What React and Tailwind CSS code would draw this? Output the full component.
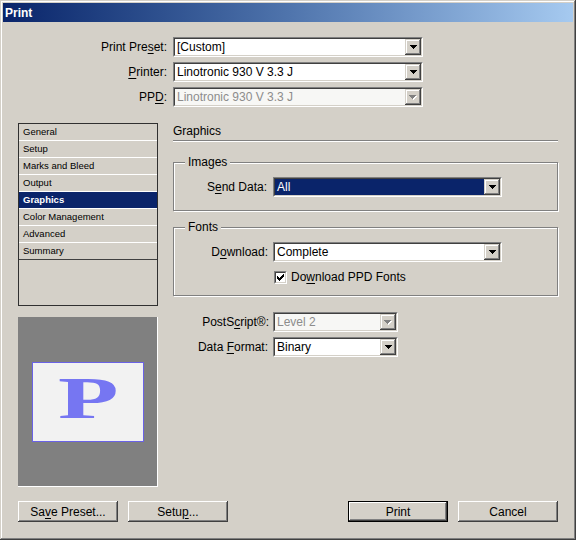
import React from "react";

const RAISED_BTN =
  "shadow-[inset_-1px_-1px_0_#404040,inset_1px_1px_0_#ffffff,inset_-2px_-2px_0_#808080,inset_2px_2px_0_#d4d0c8]";
const RAISED_ARROW =
  "shadow-[inset_-1px_-1px_0_#404040,inset_1px_1px_0_#d4d0c8,inset_-2px_-2px_0_#808080,inset_2px_2px_0_#ffffff]";

function Arrow({ disabled }) {
  const d = "M0 0h7v1H0z M1 1h5v1H1z M2 2h3v1H2z M3 3h1v1H3z";
  if (disabled) {
    return (
      <svg width="8" height="5" viewBox="0 0 8 5">
        <path d={d} fill="#ffffff" transform="translate(1 1)" />
        <path d={d} fill="#808080" />
      </svg>
    );
  }
  return (
    <svg width="7" height="4" viewBox="0 0 7 4">
      <path d={d} fill="#000000" />
    </svg>
  );
}

function Select({ value, widthClass, disabled, highlighted }) {
  return (
    <div
      className={`h-[20px] ${widthClass} border border-t-[#808080] border-l-[#808080] border-b-white border-r-white`}
    >
      <div
        className={`flex h-full border border-t-[#404040] border-l-[#404040] border-b-[#d4d0c8] border-r-[#d4d0c8] ${
          disabled ? "bg-[#f7f7f5]" : "bg-white"
        }`}
      >
        <div
          className={`flex-1 flex items-center pl-[2px] text-[12px] leading-[14px] ${
            highlighted ? "bg-[#0a246a] text-white" : disabled ? "text-[#8c8c8c]" : "text-black"
          }`}
        >
          {value}
        </div>
        <div className={`w-[16px] h-full bg-[#d4d0c8] flex items-center justify-center ${RAISED_ARROW}`}>
          <Arrow disabled={disabled} />
        </div>
      </div>
    </div>
  );
}

function Checkbox() {
  return (
    <div className="w-[13px] h-[13px] border border-t-[#808080] border-l-[#808080] border-b-white border-r-white">
      <div className="w-full h-full bg-white border border-t-[#404040] border-l-[#404040] border-b-[#d4d0c8] border-r-[#d4d0c8] flex items-center justify-center">
        <svg width="7" height="7" viewBox="0 0 7 7">
          <path
            d="M6 0h1v1h-1z M5 1h2v1h-2z M0 2h1v1H0z M4 2h3v1H4z M0 3h2v1H0z M3 3h3v1H3z M0 4h5v1H0z M1 5h3v1H1z M2 6h1v1H2z"
            fill="#000"
          />
        </svg>
      </div>
    </div>
  );
}

function PushButton({ children, isDefault }) {
  const inner = (
    <div
      className={`h-full w-full bg-[#d4d0c8] flex items-center justify-center text-[12px] leading-[14px] text-black ${RAISED_BTN}`}
    >
      {children}
    </div>
  );
  if (isDefault) {
    return <div className="w-[100px] h-[21px] border border-black">{inner}</div>;
  }
  return <div className="w-[100px] h-[21px]">{inner}</div>;
}

function U({ children }) {
  return <span className="underline underline-offset-[2px] decoration-[1px]">{children}</span>;
}

function TopRow({ label, children }) {
  return (
    <div className="flex items-center">
      <div className="w-[165px] text-right text-[12px] leading-[14px] text-black pr-[1px]">{label}</div>
      <div className="ml-[5px]">{children}</div>
    </div>
  );
}

const NAV = [
  "General",
  "Setup",
  "Marks and Bleed",
  "Output",
  "Graphics",
  "Color Management",
  "Advanced",
  "Summary",
];

function GroupBox({ title, heightClass, children }) {
  return (
    <div
      className={`relative w-[385px] ${heightClass} border border-[#808080] shadow-[inset_1px_1px_0_#ffffff,1px_1px_0_#ffffff]`}
    >
      <span className="absolute -top-[8px] left-[11px] bg-[#d4d0c8] px-[3px] text-[12px] leading-[14px] text-black">
        {title}
      </span>
      {children}
    </div>
  );
}

export default function App() {
  return (
    <div className="w-[576px] h-[540px] bg-[#d4d0c8] p-[3px] font-['Liberation_Sans',Arial,sans-serif] shadow-[inset_-1px_-1px_0_#404040,inset_1px_1px_0_#d4d0c8,inset_-2px_-2px_0_#808080,inset_2px_2px_0_#ffffff] overflow-hidden">
      {/* Title bar */}
      <div className="h-[19px] bg-linear-to-r from-[#0a246a] via-[#4f74ac] to-[#a6caf0] flex items-center pl-[2px]">
        <span className="text-white font-bold text-[12px] leading-[14px]">Print</span>
      </div>

      {/* Top form */}
      <div className="mt-[15px] flex flex-col gap-[5px]">
        <TopRow label={<>Print Pre<U>s</U>et:</>}>
          <Select value="[Custom]" widthClass="w-[250px]" />
        </TopRow>
        <TopRow label={<><U>P</U>rinter:</>}>
          <Select value="Linotronic 930 V 3.3 J" widthClass="w-[250px]" />
        </TopRow>
        <TopRow label={<>PP<U>D</U>:</>}>
          <Select value="Linotronic 930 V 3.3 J" widthClass="w-[250px]" disabled />
        </TopRow>
      </div>

      {/* Main */}
      <div className="mt-[16px] flex pl-[15px] gap-[15px]">
        {/* Left column */}
        <div className="w-[140px] flex flex-col">
          <div className="w-[140px] h-[183px] border border-[#303030] bg-[#d4d0c8]">
            {NAV.map((item, i) => {
              const selected = item === "Graphics";
              const last = i === NAV.length - 1;
              return (
                <div
                  key={item}
                  className={`h-[17px] pl-[4px] flex items-center text-[9.5px] leading-[16px] border-b ${
                    last ? "border-[#404040]" : "border-white"
                  } ${selected ? "bg-[#0a246a] text-white font-bold" : "text-black"}`}
                >
                  {item}
                </div>
              );
            })}
          </div>
          <div className="mt-[11px] w-[140px] h-[170px] bg-[#808080] shadow-[inset_-1px_-1px_0_#ffffff] flex items-center justify-center">
            <div className="w-[112px] h-[80px] bg-[#f2f2f2] border border-[#6a62e6] flex items-center justify-center overflow-hidden">
              <span className="font-['Liberation_Serif','Times_New_Roman',serif] font-bold text-[60px] leading-none text-[#7676f2] scale-x-[1.65] -translate-y-[4px]">
                P
              </span>
            </div>
          </div>
        </div>

        {/* Right column */}
        <div className="w-[385px] flex flex-col">
          <div className="h-[18px] border-b border-[#808080] shadow-[0_1px_0_#ffffff] pt-[1px] text-[12px] leading-[14px] text-black">
            Graphics
          </div>

          <div className="mt-[21px]">
            <GroupBox title="Images" heightClass="h-[49px]">
              <div className="flex items-center pt-[14px]">
                <div className="w-[93px] text-right text-[12px] leading-[14px] text-black">
                  S<U>e</U>nd Data:
                </div>
                <div className="ml-[6px]">
                  <Select value="All" widthClass="w-[229px]" highlighted />
                </div>
              </div>
            </GroupBox>
          </div>

          <div className="mt-[16px]">
            <GroupBox title="Fonts" heightClass="h-[69px]">
              <div className="flex items-center pt-[14px]">
                <div className="w-[94px] text-right text-[12px] leading-[14px] text-black">
                  D<U>o</U>wnload:
                </div>
                <div className="ml-[5px]">
                  <Select value="Complete" widthClass="w-[229px]" />
                </div>
              </div>
              <div className="flex items-center mt-[8px] ml-[100px] gap-[4px]">
                <Checkbox />
                <span className="text-[12px] leading-[14px] text-black">
                  Do<U>w</U>nload PPD Fonts
                </span>
              </div>
            </GroupBox>
          </div>

          <div className="mt-[16px] flex flex-col gap-[5px]">
            <div className="flex items-center">
              <div className="w-[96px] text-right text-[12px] leading-[14px] text-black">
                PostS<U>c</U>ript®:
              </div>
              <div className="ml-[4px]">
                <Select value="Level 2" widthClass="w-[125px]" disabled />
              </div>
            </div>
            <div className="flex items-center">
              <div className="w-[95px] text-right text-[12px] leading-[14px] text-black">
                Data <U>F</U>ormat:
              </div>
              <div className="ml-[5px]">
                <Select value="Binary" widthClass="w-[125px]" />
              </div>
            </div>
          </div>
        </div>
      </div>

      {/* Buttons */}
      <div className="mt-[14px] flex justify-between pl-[15px] pr-[15px]">
        <div className="flex gap-[10px]">
          <PushButton>
            Sa<U>v</U>e Preset...
          </PushButton>
          <PushButton>
            Setu<U>p</U>...
          </PushButton>
        </div>
        <div className="flex gap-[10px]">
          <PushButton isDefault>Print</PushButton>
          <PushButton>Cancel</PushButton>
        </div>
      </div>
    </div>
  );
}
